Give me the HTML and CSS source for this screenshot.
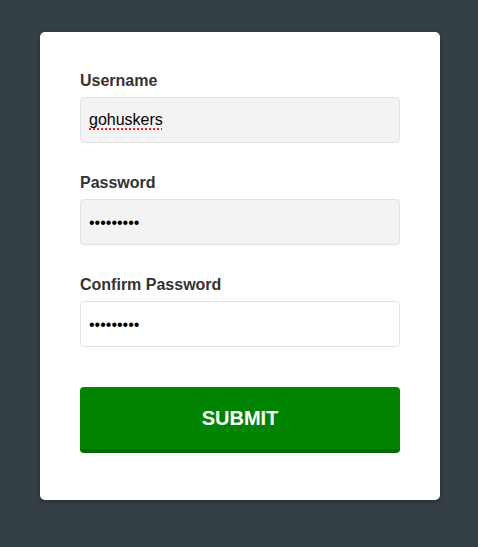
FILE: index.html
```html
<!DOCTYPE html>
<html lang="en">
<head>
<meta charset="utf-8">
<title>Sign up</title>
<link rel="stylesheet" href="styles.css">
</head>
<body>
<form class="card">
  <div class="field">
    <label class="label">Username</label>
    <div class="input filled"><span class="misspelled">gohuskers</span></div>
  </div>
  <div class="field">
    <label class="label">Password</label>
    <div class="input filled dots">•••••••••</div>
  </div>
  <div class="field last">
    <label class="label">Confirm Password</label>
    <div class="input dots">•••••••••</div>
  </div>
  <button type="button" class="submit">SUBMIT</button>
</form>
</body>
</html>
```
FILE: styles.css
```css
html, body {
  margin: 0;
  padding: 0;
}
body {
  background: #353f46;
  font-family: "Liberation Sans", Arial, sans-serif;
  padding: 32px 38px 0 40px;
  min-height: 547px;
  box-sizing: border-box;
}
.card {
  width: 400px;
  height: 468px;
  box-sizing: border-box;
  background: #fff;
  border-radius: 5px;
  padding: 40px 40px 40px;
  display: flex;
  flex-direction: column;
  box-shadow: 0 1px 4px rgba(0,0,0,0.3);
}
.field {
  display: flex;
  flex-direction: column;
  margin-bottom: 31px;
}
.field.last {
  margin-bottom: 40px;
}
.label {
  font-weight: bold;
  font-size: 16px;
  line-height: 18px;
  color: #333;
  margin-bottom: 7px;
}
.input {
  height: 46px;
  box-sizing: border-box;
  border: 1px solid #e2e2e2;
  border-radius: 4px;
  background: #fff;
  padding: 0 8px;
  display: flex;
  align-items: center;
  font-size: 16px;
  color: #000;
}
.input.filled {
  background: #f3f3f3;
}
.misspelled {
  text-decoration: underline dotted #e0201a;
  text-decoration-thickness: 2px;
  text-underline-offset: 3px;
}
.dots {
  padding-top: 1px;
}
.submit {
  height: 66px;
  border: 0;
  border-bottom: 4px solid #006a00;
  border-radius: 4px;
  background: #018501;
  color: #fff;
  font-family: "Liberation Sans", Arial, sans-serif;
  font-weight: bold;
  font-size: 20px;
  padding: 0;
}
```
